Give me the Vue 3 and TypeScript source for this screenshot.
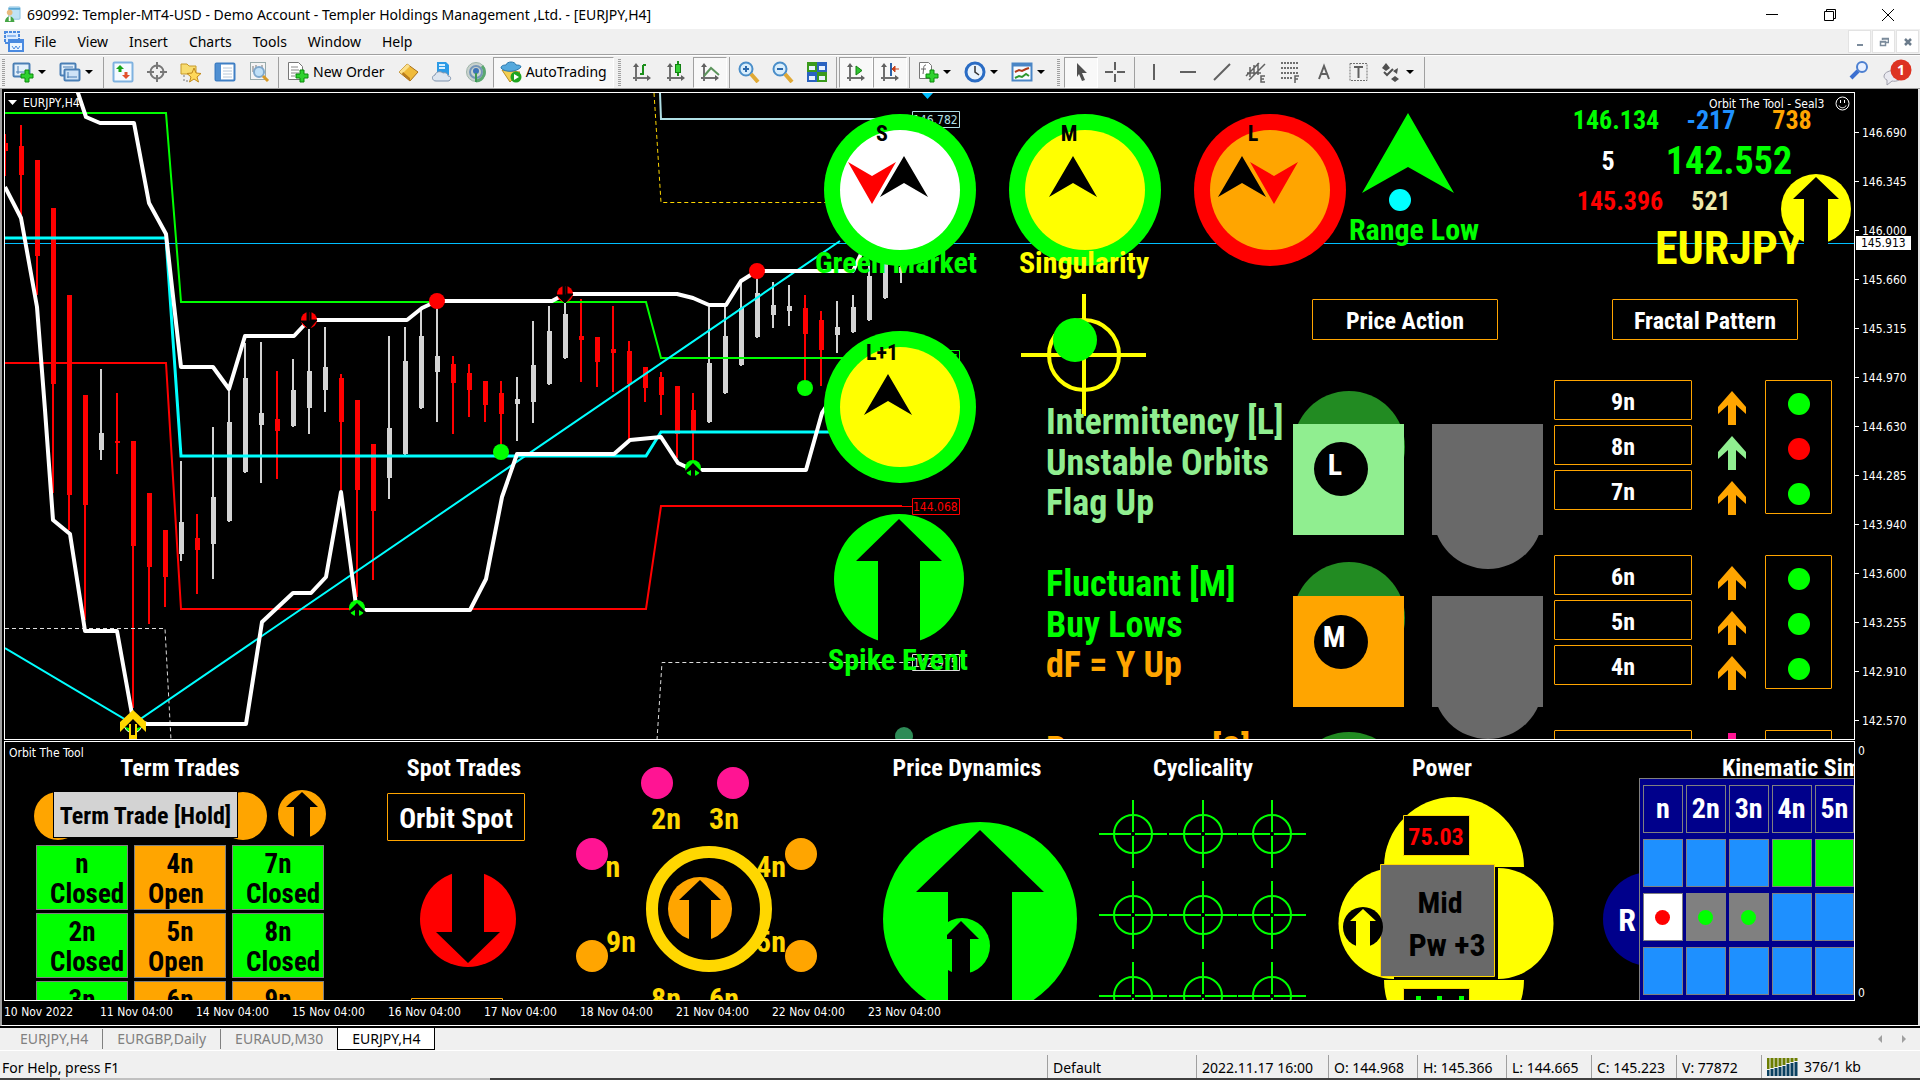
<script setup lang="ts">
interface Label { x: number; y: number; t: string; c: string; s: number; a?: 'middle' }
type Candle = [number, number, number, number, number]

const menus = ['File', 'View', 'Insert', 'Charts', 'Tools', 'Window', 'Help']

const chartAxes = '<path d="M5 5v15M2 17h15" stroke="#707070" stroke-width="2" fill="none"/><path d="M2 6l3-4 3 4zM16 14l4 3-4 3z" fill="#606060"/>'
const plus = '<path d="M13 9h4v4h4v4h-4v4h-4v-4H9v-4h4z" fill="#2fd22f" stroke="#0c8a0c"/>'
const icons: Record<string, string> = {
  newChart: '<rect x="1.500" y="2.500" width="16" height="13" rx="1" fill="#e3f0fb" stroke="#4a7fb5" stroke-width="2"/><path d="M6 5v8M4 11h9" stroke="#4a7fb5" fill="none"/>' + plus,
  profiles: '<rect x="1.500" y="2.500" width="15" height="12" rx="1" fill="#e3f0fb" stroke="#4a7fb5" stroke-width="2"/><path d="M4 6h10" stroke="#4a7fb5"/><rect x="5.500" y="8.500" width="15" height="11" rx="1" fill="#cfe4f7" stroke="#4a7fb5" stroke-width="2"/><path d="M8 16h10M9 11v6" stroke="#4a7fb5"/>',
  market: '<rect x="1.500" y="1.500" width="19" height="19" rx="1" fill="#f5faff" stroke="#7fb2e0" stroke-width="2"/><path d="M8 4l4 4h-2.500v3h-3V8H4z" fill="#16a516"/><path d="M14 18l4-4h-2.500v-3h-3v3H10z" fill="#e2502a"/>',
  target: '<circle cx="11" cy="11" r="6.500" fill="none" stroke="#777" stroke-width="2"/><path d="M11 1v7M11 14v7M1 11h7M14 11h7" stroke="#777" stroke-width="2"/>',
  star: '<path d="M1 3h6l2 2h7v8H1z" fill="#f8dc70" stroke="#c79a2a"/><path d="M4 14v6h5" stroke="#777" stroke-dasharray="2 2" fill="none"/><path d="M14 7l2 5 5 .5-4 3.500 1.500 5-4.500-3-4.500 3L11 16l-4-3.500 5-.5z" fill="#ffd85a" stroke="#c28a1c"/>',
  dataWin: '<rect x="1.500" y="2.500" width="19" height="17" rx="1" fill="#fff" stroke="#3f7fc4" stroke-width="2"/><rect x="2" y="3" width="5" height="16" fill="#4f8fd2"/><path d="M9 7h9M9 10h9M9 13h9M9 16h9" stroke="#b8c8d8"/>',
  tester: '<rect x="2.500" y="1.500" width="15" height="17" fill="#f4f4f4" stroke="#9aa"/><path d="M5 5v6M8 4v5M14 4v5" stroke="#777"/><circle cx="11" cy="11" r="5" fill="#bfe0f7" stroke="#7fa8cc" stroke-width="2"/><path d="M15 15l5 5" stroke="#d79a28" stroke-width="3"/>',
  order: '<path d="M1.500 1.500h10l4 4v13h-14z" fill="#fff" stroke="#777"/><path d="M4 6h7M4 9h8M4 12h8M4 15h4" stroke="#888"/>' + plus,
  gold: '<path d="M2 11l8-8 11 8-8 9z" fill="#f0bb3a" stroke="#a8701a"/><path d="M2 11l8-8 3 2-8 8z" fill="#fbe08a"/><path d="M5 13l8 7v-3l-7-6z" fill="#b97c1d"/>',
  cloud: '<path d="M6 1h9l3 3v10H6z" fill="#2c9be6"/><path d="M8 4h6M8 7h6" stroke="#d6efff" stroke-width="2"/><path d="M5 20c-4 0-5-5-1-6 1-4 6-4 8-2 3-1 5 1 5 3 4 0 3 5 0 5z" fill="#dde5ef" stroke="#7f93ad"/>',
  signal: '<circle cx="11" cy="11" r="9.500" fill="#c9d2ce" stroke="#9fb5aa"/><path d="M11 20a9 9 0 0 0 6-15" fill="none" stroke="#5aa870" stroke-width="3"/><circle cx="11" cy="11" r="6" fill="none" stroke="#7596b8" stroke-width="2"/><circle cx="11" cy="10" r="3" fill="#3c74b8"/><path d="M11 12v9" stroke="#3b9a55" stroke-width="2"/>',
  auto: '<path d="M2 9l8 12 10-10z" fill="#f3cf52" stroke="#b98c22"/><path d="M1 7c0-3 4-3 5-3 1-4 9-4 10 0 2 0 5 0 5 2-4 5-16 6-20 1z" fill="#55a9dd" stroke="#2c79ad"/><circle cx="16" cy="16" r="5.500" fill="#1ea51e"/><path d="M14 13l5 3-5 3z" fill="#fff"/>',
  bars: chartAxes + '<path d="M12 4v10M12 4h3M9 13h3" stroke="#1b8f1b" stroke-width="2"/>',
  candles: chartAxes + '<path d="M13 0v15" stroke="#1b8f1b" stroke-width="2"/><rect x="10.500" y="3.500" width="5" height="8" fill="#35cf35" stroke="#128012"/>',
  line: chartAxes + '<path d="M5 15l7-8 8 7" stroke="#5c945c" stroke-width="2" fill="none"/>',
  zoomIn: '<circle cx="8" cy="8" r="6.500" fill="#d9eefc" stroke="#4a8ec9" stroke-width="2"/><path d="M5 8h6M8 5v6" stroke="#2b69ac" stroke-width="2"/><path d="M13 13l7 8" stroke="#e0a935" stroke-width="4"/>',
  zoomOut: '<circle cx="8" cy="8" r="6.500" fill="#d9eefc" stroke="#4a8ec9" stroke-width="2"/><path d="M5 8h6" stroke="#2b69ac" stroke-width="2"/><path d="M13 13l7 8" stroke="#e0a935" stroke-width="4"/>',
  tile: '<path d="M1 1h10v10H1zM11 11h10v10H11z" fill="#3a9a1c"/><path d="M11 1h10v10H11zM1 11h10v10H1z" fill="#2a62c0"/><path d="M3 5h6v4H3zM13 5h6v4h-6zM3 15h6v4H3zM13 15h6v4h-6z" fill="#e8f2ff"/>',
  scroll: chartAxes + '<path d="M11 5v9l6-4.500z" fill="#2fc52f" stroke="#158015"/>',
  shift: chartAxes + '<path d="M12 2v13" stroke="#2b62a8" stroke-width="2"/><path d="M20 8h-6M16 5l-3 3 3 3z" stroke="#c8431c" fill="#c8431c"/>',
  indicator: '<path d="M2.500 1.500h9l3 3v13h-12z" fill="#fff" stroke="#777"/><path d="M9 4c-3 0-2 3-3 9M4 8h5" stroke="#666" fill="none"/>' + plus,
  clock: '<circle cx="11" cy="11" r="9" fill="#e9f3fc" stroke="#2a6cc4" stroke-width="3"/><path d="M11 5v6l4 3" stroke="#333" fill="none" stroke-width="1.500"/>',
  template: '<rect x="1.500" y="2.500" width="19" height="17" fill="#f8fbff" stroke="#4a86c6" stroke-width="2"/><path d="M2 4h18" stroke="#4a86c6" stroke-width="3"/><path d="M4 11l4-2 3 1 4-2 3-1" stroke="#b03818" stroke-width="2" fill="none"/><path d="M4 17l4-2 3 1 4-3 3 2" stroke="#2c962c" stroke-width="2" fill="none"/>',
  cursor: '<path d="M7 2l10 10h-5l3 7-3 1-3-7-2 3z" fill="#505050"/>',
  cross: '<path d="M11 1v8M11 13v8M1 11h8M13 11h8" stroke="#606060" stroke-width="2"/>',
  vline: '<path d="M11 3v16" stroke="#606060" stroke-width="2"/>',
  hline: '<path d="M3 11h16" stroke="#606060" stroke-width="2"/>',
  trend: '<path d="M3 19L19 3" stroke="#606060" stroke-width="2"/>',
  channel: '<path d="M1 15L14 2M4 19L20 3M5 6v10M9 4v10M13 2v12M2 12h14" stroke="#606060" stroke-width="1.500"/><path d="M20 15h-4v6h4M16 18h3" fill="none" stroke="#606060" stroke-width="1.500"/>',
  fibo: '<path d="M2 2h18M2 7h18M2 12h18M2 17h11" stroke="#707070" stroke-width="2" stroke-dasharray="2 1"/><path d="M20 15h-4v7M16 18h3" fill="none" stroke="#606060" stroke-width="1.500"/>',
  text: '<path d="M6 18l5-13 5 13M8 13h6" fill="none" stroke="#606060" stroke-width="2"/>',
  label: '<rect x="3" y="2.500" width="17" height="17" fill="none" stroke="#707070" stroke-dasharray="2 1"/><path d="M7 6h9M11.500 6v11" fill="none" stroke="#606060" stroke-width="2"/>',
  shapes: '<path d="M2 7l4-5 4 5-4 3zM11 18l4-3 4 3-4 3z" fill="#505050"/><path d="M4 11l3 3 6-6" stroke="#505050" stroke-width="2" fill="none"/><path d="M13 10l5-3-1 6z" fill="#505050"/>',
}
type Tool = { k: string; i?: string; n?: string; on?: boolean; drop?: boolean; t?: string }
const tools: Tool[] = [
  { k: 'grip' },
  { k: 'btn', i: 'newChart', n: 'New chart', drop: true }, { k: 'btn', i: 'profiles', n: 'Profiles', drop: true }, { k: 'sep' },
  { k: 'btn', i: 'market', n: 'Market Watch' }, { k: 'btn', i: 'target', n: 'Navigator' }, { k: 'btn', i: 'star', n: 'Favorites' },
  { k: 'btn', i: 'dataWin', n: 'Terminal' }, { k: 'btn', i: 'tester', n: 'Strategy Tester' }, { k: 'sep' },
  { k: 'btn', i: 'order', n: 'New Order', t: 'New Order' },
  { k: 'btn', i: 'gold', n: 'MetaEditor' }, { k: 'btn', i: 'cloud', n: 'Virtual hosting' }, { k: 'btn', i: 'signal', n: 'Signals' },
  { k: 'btn', i: 'auto', n: 'AutoTrading', t: 'AutoTrading', on: true },
  { k: 'grip' },
  { k: 'btn', i: 'bars', n: 'Bar chart' }, { k: 'btn', i: 'candles', n: 'Candlesticks' }, { k: 'btn', i: 'line', n: 'Line chart', on: true }, { k: 'sep' },
  { k: 'btn', i: 'zoomIn', n: 'Zoom in' }, { k: 'btn', i: 'zoomOut', n: 'Zoom out' }, { k: 'btn', i: 'tile', n: 'Tile windows' }, { k: 'sep' },
  { k: 'btn', i: 'scroll', n: 'Auto scroll', on: true }, { k: 'btn', i: 'shift', n: 'Chart shift', on: true }, { k: 'sep' },
  { k: 'btn', i: 'indicator', n: 'Indicators', drop: true }, { k: 'btn', i: 'clock', n: 'Periods', drop: true }, { k: 'btn', i: 'template', n: 'Templates', drop: true },
  { k: 'grip' },
  { k: 'btn', i: 'cursor', n: 'Cursor', on: true }, { k: 'btn', i: 'cross', n: 'Crosshair' }, { k: 'sep' },
  { k: 'btn', i: 'vline', n: 'Vertical line' }, { k: 'btn', i: 'hline', n: 'Horizontal line' }, { k: 'btn', i: 'trend', n: 'Trendline' },
  { k: 'btn', i: 'channel', n: 'Channel' }, { k: 'btn', i: 'fibo', n: 'Fibonacci' }, { k: 'btn', i: 'text', n: 'Text' }, { k: 'btn', i: 'label', n: 'Text label' },
  { k: 'btn', i: 'shapes', n: 'Arrows', drop: true }, { k: 'sep' },
]

// One row per H4 bar: bullish flag, high, low, body top, body bottom
const candles: Candle[] = [
  [0, 134, 176, 143, 151], [0, 125, 215, 146, 175], [0, 160, 295, 160, 256], [0, 208, 493, 208, 384], [0, 295, 530, 295, 495],
  [0, 395, 620, 395, 505], [1, 369, 460, 433, 450], [0, 393, 474, 441, 443], [0, 441, 708, 441, 546], [0, 493, 624, 493, 567],
  [0, 530, 607, 530, 577], [1, 461, 561, 522, 554], [0, 514, 594, 538, 550], [1, 427, 579, 497, 544], [1, 390, 522, 422, 521],
  [1, 343, 473, 378, 472], [1, 342, 483, 413, 425], [0, 371, 479, 419, 431], [1, 359, 427, 390, 426], [1, 325, 434, 371, 408],
  [1, 327, 412, 367, 390], [0, 374, 490, 378, 422], [0, 400, 597, 400, 490], [0, 444, 580, 444, 511], [1, 336, 499, 428, 478],
  [1, 327, 455, 361, 454], [1, 308, 409, 336, 408], [1, 303, 422, 356, 372], [0, 356, 434, 364, 383], [0, 364, 417, 373, 390],
  [0, 381, 422, 381, 405], [0, 381, 445, 393, 414], [1, 377, 441, 399, 404], [1, 321, 423, 365, 402], [1, 306, 385, 331, 384],
  [1, 302, 359, 314, 358], [0, 299, 382, 336, 340], [0, 337, 387, 337, 362], [0, 306, 392, 349, 353], [0, 341, 439, 351, 384],
  [0, 367, 402, 367, 388], [0, 372, 415, 377, 395], [0, 386, 458, 386, 434], [0, 393, 460, 410, 433], [1, 307, 423, 363, 422],
  [1, 307, 394, 336, 393], [1, 282, 366, 308, 365], [1, 277, 338, 293, 337], [1, 282, 328, 305, 315], [1, 285, 326, 306, 311],
  [0, 295, 380, 308, 334], [0, 311, 386, 320, 350], [1, 301, 353, 327, 335], [1, 295, 333, 307, 332], [1, 263, 321, 276, 320],
  [1, 257, 299, 257, 298], [1, 257, 283, 267, 273],
]

const lime = '#00ff00', yellow = '#ffff00', orange = '#ffa500', gold = '#ffd700', pink = '#ff1493'

// Arrow that fills a disc of radius r, its shaft open at the disc's edge
function cut(cx: number, cy: number, r: number, down = false): string {
  const k = down ? -1 : 1
  const p = (x: number, y: number) => `${Math.round(cx + x * r)} ${Math.round(cy + k * y * r)}`
  return `M${p(0, -0.92)}L${p(0.66, -0.28)}L${p(0.33, -0.28)}L${p(0.33, 1.02)}L${p(-0.33, 1.02)}L${p(-0.33, -0.28)}L${p(-0.66, -0.28)}Z`
}
const wedge = (x: number, y: number) => `M${x} ${y}l24 41-24-14-24 14z`
const wedgeDown = (x: number, y: number) => `M${x} ${y}l24-42-24 14-24-14z`

const dials = [
  { x: 900, y: 190, ring: lime, face: '#ffffff' },
  { x: 1085, y: 190, ring: lime, face: yellow },
  { x: 1270, y: 190, ring: '#ff0000', face: orange },
  { x: 900, y: 407, ring: lime, face: yellow },
]

const mainLabels: Label[] = [
  { x: 882, y: 141, t: 'S', c: '#000', s: 1, a: 'middle' }, { x: 1069, y: 141, t: 'M', c: '#000', s: 1, a: 'middle' },
  { x: 1253, y: 141, t: 'L', c: '#000', s: 1, a: 'middle' }, { x: 882, y: 360, t: 'L+1', c: '#000', s: 1, a: 'middle' },
  { x: 896, y: 273, t: 'Green Market', c: lime, s: 3, a: 'middle' }, { x: 1084, y: 273, t: 'Singularity', c: yellow, s: 3, a: 'middle' },
  { x: 1414, y: 240, t: 'Range Low', c: lime, s: 3, a: 'middle' }, { x: 898, y: 670, t: 'Spike Event', c: lime, s: 3, a: 'middle' },
  { x: 1046, y: 434, t: 'Intermittency [L]', c: '#90ee90', s: 5 }, { x: 1046, y: 475, t: 'Unstable Orbits', c: '#90ee90', s: 5 },
  { x: 1046, y: 515, t: 'Flag Up', c: '#90ee90', s: 5 }, { x: 1046, y: 596, t: 'Fluctuant [M]', c: lime, s: 5 },
  { x: 1046, y: 637, t: 'Buy Lows', c: lime, s: 5 }, { x: 1046, y: 677, t: 'dF = Y Up', c: orange, s: 5 },
  { x: 1046, y: 762, t: 'Resonance [S]', c: orange, s: 5 },
  { x: 1335, y: 475, t: 'L', c: '#fff', s: 3, a: 'middle' }, { x: 1334, y: 647, t: 'M', c: '#fff', s: 3, a: 'middle' },
  { x: 1616, y: 129, t: '146.134', c: lime, s: 8, a: 'middle' }, { x: 1711, y: 129, t: '-217', c: '#1e90ff', s: 8, a: 'middle' },
  { x: 1792, y: 129, t: '738', c: orange, s: 8, a: 'middle' }, { x: 1608, y: 170, t: '5', c: '#fff', s: 8, a: 'middle' },
  { x: 1729, y: 174, t: '142.552', c: lime, s: 6, a: 'middle' }, { x: 1620, y: 210, t: '145.396', c: '#ff0000', s: 8, a: 'middle' },
  { x: 1711, y: 210, t: '521', c: '#eee8aa', s: 8, a: 'middle' }, { x: 1729, y: 264, t: 'EURJPY', c: yellow, s: 7, a: 'middle' },
]

const orbit = [
  { x: 657, y: 783, c: pink }, { x: 733, y: 783, c: pink }, { x: 592, y: 854, c: pink },
  { x: 801, y: 854, c: orange }, { x: 592, y: 956, c: orange }, { x: 801, y: 956, c: orange },
]
const orbitLabels: Label[] = [
  { x: 666, y: 829, t: '2n', c: gold, s: 3, a: 'middle' }, { x: 724, y: 829, t: '3n', c: gold, s: 3, a: 'middle' },
  { x: 613, y: 877, t: 'n', c: gold, s: 3, a: 'middle' }, { x: 771, y: 877, t: '4n', c: gold, s: 3, a: 'middle' },
  { x: 621, y: 952, t: '9n', c: gold, s: 3, a: 'middle' }, { x: 771, y: 952, t: '5n', c: gold, s: 3, a: 'middle' },
  { x: 666, y: 1009, t: '8n', c: gold, s: 3, a: 'middle' }, { x: 724, y: 1009, t: '6n', c: gold, s: 3, a: 'middle' },
]
const subLabels: Label[] = [
  { x: 180, y: 776, t: 'Term Trades', c: '#fff', s: 2, a: 'middle' }, { x: 464, y: 776, t: 'Spot Trades', c: '#fff', s: 2, a: 'middle' },
  { x: 967, y: 776, t: 'Price Dynamics', c: '#fff', s: 2, a: 'middle' }, { x: 1203, y: 776, t: 'Cyclicality', c: '#fff', s: 2, a: 'middle' },
  { x: 1442, y: 776, t: 'Power', c: '#fff', s: 2, a: 'middle' }, { x: 1722, y: 776, t: 'Kinematic Similarity', c: '#fff', s: 2 },
  { x: 1436, y: 845, t: '75.03', c: '#ff0000', s: 2, a: 'middle' }, { x: 1440, y: 913, t: 'Mid', c: '#000', s: 3, a: 'middle' },
  { x: 1447, y: 956, t: 'Pw +3', c: '#000', s: 4, a: 'middle' }, { x: 1627, y: 931, t: 'R', c: '#fff', s: 4, a: 'middle' },
]

const ladder = [
  { rows: ['9n', '8n', '7n'], arrows: [orange, '#90ee90', orange], lamps: [lime, '#ff0000', lime], down: false },
  { rows: ['6n', '5n', '4n'], arrows: [orange, orange, orange], lamps: [lime, lime, lime], down: false },
  { rows: ['3n', '2n', 'n'], arrows: [pink, pink, pink], lamps: [lime, lime, lime], down: true },
]
const terms = [
  ['n', 0], ['4n', 1], ['7n', 0], ['2n', 0], ['5n', 1], ['8n', 0], ['3n', 0], ['6n', 1], ['9n', 1],
] as [string, number][]
const kinHead = ['n', '2n', '3n', '4n', '5n', '6n', '7n', '8n', '9n']
const kinRows = [
  ['b', 'b', 'b', 'g', 'g', 'g', 'b', 'b', 'b'],
  ['wr', 'kg', 'kg', 'b', 'b', 'b', 'b', 'b', 'b'],
  ['b', 'b', 'b', 'b', 'b', 'b', 'b', 'b', 'b'],
]
const cycles = [834, 915, 996].flatMap(y => [1133, 1203, 1272].map(x => ({ x, y })))
const prices = ['146.690', '146.345', '146.000', '145.660', '145.315', '144.970', '144.630', '144.285', '143.940', '143.600', '143.255', '142.910', '142.570']
const times = ['10 Nov 2022', '11 Nov 04:00', '14 Nov 04:00', '15 Nov 04:00', '16 Nov 04:00', '17 Nov 04:00', '18 Nov 04:00', '21 Nov 04:00', '22 Nov 04:00', '23 Nov 04:00']
const tabs = ['EURJPY,H4', 'EURGBP,Daily', 'EURAUD,M30', 'EURJPY,H4']
</script>

<template>
  <div class="app">
    <header class="titlebar">
      <svg class="logo" viewBox="0 0 18 18"><rect x="5" y="1" width="12" height="13" rx="1" fill="#bfe2f5" stroke="#8cc3e2" /><path d="M5 3h12" stroke="#5aa7d4" stroke-width="2" /><circle cx="6" cy="7" r="3" fill="#e8b97c" /><path d="M1 17c0-8 10-8 10 0z" fill="#45a545" /><path d="M6 11v5" stroke="#fff" stroke-width="2" /></svg>
      <h1>690992: Templer-MT4-USD - Demo Account - Templer Holdings Management ,Ltd. - [EURJPY,H4]</h1>
      <div class="winbtns">
        <button aria-label="Minimize"><svg viewBox="0 0 12 12"><path d="M0 5.500h12" /></svg></button>
        <button aria-label="Restore"><svg viewBox="0 0 12 12"><path d="M.5 2.500h9v9h-9zM2.500 2.500v-2h9v9h-2" /></svg></button>
        <button aria-label="Close"><svg viewBox="0 0 12 12"><path d="M0 0l12 12M12 0L0 12" /></svg></button>
      </div>
    </header>

    <nav class="menubar">
      <svg class="mlogo" viewBox="0 0 20 22"><path d="M1 1h14v11H1z" fill="#dcecff" stroke="#4a8ae0" stroke-width="2" stroke-dasharray="3 1" /><path d="M3 5h9" stroke="#4a8ae0" /><path d="M5 9h14v11H5z" fill="#eef6ff" stroke="#4a8ae0" stroke-width="2" /><path d="M6 11h12" stroke="#4a8ae0" stroke-width="2" /><path d="M8 15l2 3 2-3 2 3 2-3" stroke="#4a8ae0" fill="none" /></svg>
      <button v-for="m in menus" :key="m">{{ m }}</button>
      <div class="mdi">
        <button aria-label="Minimize chart"><svg viewBox="0 0 10 10"><path d="M2 7h6v2H2z" fill="#7b8b9b" /></svg></button>
        <button aria-label="Restore chart"><svg viewBox="0 0 10 10"><path d="M3.500 3V1.500h6v4H7M1.500 4.500h5v4h-5zM3 2h6M1 5h5" fill="none" stroke="#7b8b9b" stroke-width="1.500" /></svg></button>
        <button aria-label="Close chart"><svg viewBox="0 0 10 10"><path d="M2 2l6 6M8 2L2 8" stroke="#6b7b8b" stroke-width="2.500" /></svg></button>
      </div>
    </nav>

    <div class="toolbar">
      <template v-for="(b, n) in tools" :key="n">
        <i v-if="b.k === 'grip'" class="grip"></i>
        <i v-else-if="b.k === 'sep'" class="sep"></i>
        <button v-else :class="{ on: b.on, drop: b.drop, wide: b.t }" :aria-label="b.n">
          <svg viewBox="0 0 22 22" v-html="icons[b.i!]"></svg>
          <span v-if="b.t">{{ b.t }}</span>
          <b v-if="b.drop" class="caret"></b>
        </button>
      </template>
      <div class="right">
        <button aria-label="Search"><svg viewBox="0 0 22 22"><circle cx="14" cy="8" r="5" fill="#e8f0ff" stroke="#4c7fd0" stroke-width="2" /><path d="M10 12l-7 7" stroke="#3c6fd0" stroke-width="4" /></svg></button>
        <button class="chat" aria-label="1 message"><svg viewBox="0 0 32 28"><path d="M2 18c0-6 16-8 18-2 1 6-6 8-10 7l-5 4v-5c-2-1-3-2-3-4z" fill="#e9e9f0" stroke="#a0a0ac" /><circle cx="19" cy="12" r="10.500" fill="#dd3322" /></svg><em>1</em></button>
      </div>
    </div>

    <main class="workspace">
      <div class="plots">
        <section class="panel price" aria-label="EURJPY,H4 chart">
          <svg class="layer">
            <g transform="translate(-5 -93)">
              <path d="M5 243.500H1855" stroke="#00bfff" />
              <g shape-rendering="crispEdges">
                <g v-for="(c, i) in candles" :key="i" :fill="c[0] ? '#d3d3d3' : '#ff0000'">
                  <rect :x="4 + 16 * i" :y="c[1]" width="2" :height="c[2] - c[1]" />
                  <rect :x="3 + 16 * i" :y="c[3]" width="5" :height="c[4] - c[3]" />
                </g>
              </g>
              <g fill="none">
                <path d="M5 628.500H165L171 740M657 740L662 662.500H912" stroke="#ddd" stroke-dasharray="4 3" />
                <path d="M654 93L661 202.500H830" stroke="#ffd700" stroke-dasharray="4 3" />
                <path d="M660 93L661 119H880" stroke="#b0e0e6" stroke-width="2" />
                <path d="M5 113H166L181 302H646L661 358H843" stroke="#00ff00" stroke-width="2" />
                <path d="M5 363H166L181 609H646L661 506H902" stroke="#ff0000" stroke-width="2" />
                <path d="M902 506.500H912" stroke="#ff0000" />
                <path d="M5 238H166L181 456H646L661 432H840" stroke="#00ffff" stroke-width="3" />
                <path d="M5 648L133 724L840 241" stroke="#00ffff" stroke-width="2" />
                <g stroke="#fff" stroke-width="4" stroke-linejoin="round">
                  <path d="M77 90L86 117L100 123H134L149 203L166 234L181 367H213L229 389L245 336H294L309 320H407L422 308L437 301H552L565 294H677L693 298L709 305H726L741 281L757 271H853L861 254" />
                  <path d="M5 187L21 218L37 307L45 410L53 520L70 534L85 631H117L133 720L147 724H246L262 622L293 593H311L326 577L341 492L356 605L365 610H470L486 579L502 497L517 454H614L630 440L661 437L678 463L693 470H806L822 413L834 394" />
                </g>
                <g stroke-width="1">
                  <path d="M912.500 111.500h47v16h-47z" stroke="#b0e0e6" /><path d="M912.500 350.500h47v16h-47z" stroke="#00ff00" />
                  <path d="M912.500 498.500h47v16h-47z" stroke="#ff0000" /><path d="M912.500 654.500h47v16h-47z" stroke="#ddd" />
                </g>
              </g>
              <g class="small">
                <text x="913" y="124" fill="#b0e0e6">146.782</text><text x="913" y="363" fill="#00ff00">145.097</text>
                <text x="913" y="511" fill="#ff0000">144.068</text><text x="913" y="667" fill="#ddd">142.975</text>
                <text x="23" y="107" fill="#fff">EURJPY,H4</text>
              </g>
              <path d="M8 100h9l-4.500 5z" fill="#fff" />
              <path d="M922 93h11l-5.500 6z" fill="#00bfff" />
              <g fill="#ff0000"><circle cx="437" cy="301" r="8" /><circle cx="757" cy="271" r="8" /><circle cx="309" cy="320" r="8" /><circle cx="565" cy="294" r="8" /></g>
              <path v-for="m in [[309, 320], [565, 294]]" :key="m[0]" :d="`M${m[0] - 2} ${m[1] - 8}v9h-6l8 8 8-9h-6v-8h-1v9h-1v-9z`" fill="#000" stroke="#000" />
              <g fill="#00ff00"><circle cx="501" cy="452" r="8" /><circle cx="805" cy="388" r="8" /><circle cx="357" cy="608" r="8" /><circle cx="693" cy="468" r="8" /></g>
              <path v-for="m in [[357, 608], [693, 468]]" :key="m[0]" :d="`M${m[0]} ${m[1] - 5}l9 9-2 1-5-3v7h-4v-7l-5 3-2-1z`" fill="#000" />
              <circle cx="133" cy="724" r="9" fill="#00ff00" stroke="#fff" /><path d="M133 714l12 12-8 2v11h-8v-11l-8-2z" fill="#000" />
              <path d="M133 710L146 722V732L133 719L120 732V722Z" fill="#ffd700" /><path d="M129 724h2v11h4v-11h2v15h-8z" fill="#ffd700" />

              <g v-for="(d, i) in dials" :key="i"><circle :cx="d.x" :cy="d.y" r="76" :fill="d.ring" /><circle :cx="d.x" :cy="d.y" r="60" :fill="d.face" /></g>
              <path :d="wedge(904, 156) + wedge(1073, 156) + wedge(1242, 156) + wedge(888, 374)" fill="#000" />
              <path :d="wedgeDown(872, 204) + wedgeDown(1274, 204)" fill="#ff0000" />
              <path d="M1408 113L1454 193L1408 167L1362 193Z" fill="#00ff00" /><circle cx="1400" cy="200" r="11" fill="#00ffff" />
              <circle cx="899" cy="579" r="65" fill="#00ff00" /><path :d="cut(899, 579, 65)" fill="#000" />
              <path d="M1021 355H1146M1084 294V416" stroke="#ffff00" stroke-width="4" /><circle cx="1084" cy="355" r="35" fill="none" stroke="#ffff00" stroke-width="4" />
              <circle cx="1075" cy="340" r="22" fill="#00ff00" />
              <circle cx="904" cy="736" r="9" fill="#2e8b57" />
              <g fill="#228b22"><circle cx="1349" cy="447" r="56" /><circle cx="1349" cy="788" r="56" /></g>
              <path d="M1293 480h111v82h-111z" fill="#000" /><path d="M1293 424h111v111h-111z" fill="#90ee90" />
              <circle cx="1349" cy="618" r="56" fill="#228b22" /><path d="M1293 596h111v111h-111z" fill="#ffa500" />
              <g fill="#696969"><circle cx="1488" cy="514" r="55" /><circle cx="1488" cy="684" r="55" /></g>
              <path d="M1430 569h115v27h-115z" fill="#000" /><path d="M1432 424h111v111h-111zM1432 596h111v111h-111z" fill="#696969" />
              <circle cx="1341" cy="469" r="27" fill="#000" /><circle cx="1341" cy="642" r="27" fill="#000" />
              <circle cx="1816" cy="209" r="35" fill="#ffff00" /><path :d="cut(1816, 209, 35)" fill="#000" />
              <text v-for="(l, i) in mainLabels" :key="i" :x="l.x" :y="l.y" :fill="l.c" :text-anchor="l.a" :class="'agency s' + l.s">{{ l.t }}</text>
              <text x="1709" y="108" fill="#fff" class="small">Orbit The Tool - Seal3</text>
              <g stroke="#fff" fill="none"><circle cx="1842.500" cy="103.500" r="6.500" /><path d="M1839 105.500c1 3 6 3 7 0M1840.500 100v3M1844.500 100v3" /></g>
            </g>
          </svg>
          <button class="box action">Price Action</button>
          <button class="box fractal">Fractal Pattern</button>
          <div class="ladder">
            <div v-for="g in ladder" :key="g.rows[0]" class="rung">
              <div class="steps"><button v-for="r in g.rows" :key="r" class="box">{{ r }}</button></div>
              <div class="arrows">
                <svg v-for="(a, i) in g.arrows" :key="i" viewBox="0 0 28 34"><path :d="g.down ? 'M10 -8h8v25l9-9v9L14 33 1 17V8l9 9z' : 'M14 0L28 16V23L18 14V34H10V14L0 23V16Z'" :fill="a" /></svg>
              </div>
              <div class="lamps"><i v-for="(l, i) in g.lamps" :key="i" :style="{ background: l }"></i></div>
            </div>
          </div>
        </section>

        <section class="panel sub" aria-label="Orbit The Tool">
          <svg class="layer">
            <g transform="translate(-5 -742)">
              <text x="9" y="757" fill="#fff" class="small">Orbit The Tool</text>
              <g fill="#ffa500"><circle cx="58" cy="816" r="24" /><circle cx="243" cy="816" r="24" /><circle cx="302" cy="814" r="24" /></g>
              <path :d="cut(302, 814, 24)" fill="#000" />
              <circle cx="468" cy="919" r="48" fill="#ff0000" /><path :d="cut(468, 919, 48, true)" fill="#000" />
              <path d="M411.500 1010V998.500h91V1010" fill="none" stroke="#ffa500" />
              <circle v-for="(o, i) in orbit" :key="i" :cx="o.x" :cy="o.y" r="16" :fill="o.c" />
              <text v-for="(l, i) in orbitLabels" :key="'o' + i" :x="l.x" :y="l.y" :fill="l.c" :text-anchor="l.a" :class="'agency s' + l.s">{{ l.t }}</text>
              <circle cx="709" cy="909" r="57" fill="#000" stroke="#ffd700" stroke-width="12" />
              <circle cx="700" cy="909" r="32" fill="#ffa500" /><path :d="cut(700, 909, 32)" fill="#000" />
              <circle cx="980" cy="919" r="97" fill="#00ff00" /><path :d="cut(980, 919, 97)" fill="#000" />
              <circle cx="962" cy="946" r="28" fill="#00ff00" /><path :d="cut(961, 947, 28)" fill="#000" /><path d="M920 935h27v50h-27z" fill="#00ff00" />
              <g v-for="(c, i) in cycles" :key="'c' + i" stroke="#00ff00" stroke-width="2" fill="none">
                <circle :cx="c.x" :cy="c.y" r="19" /><path :d="`M${c.x - 34} ${c.y}h32m4 0h32M${c.x} ${c.y - 34}v32m0 4v32`" />
              </g>
              <g fill="#ffff00">
                <path d="M1384 867a70 70 0 0 1 140 0z" /><path d="M1394 868a55 55 0 0 0 0 111z" /><path d="M1498 868a55 55 0 0 1 0 111z" /><path d="M1384 980h140a70 70 0 0 1-140 0z" />
              </g>
              <path d="M1403.500 815.500h66v40h-66zM1403.500 988.500h66v40h-66z" fill="#000" stroke="#ffd700" />
              <path d="M1380.500 864.500h114v112h-114z" fill="#696969" stroke="#ffd700" />
              <circle cx="1363" cy="927" r="20" fill="#000" /><path :d="cut(1363, 927, 20)" fill="#ffff00" />
              <path d="M1416 996h5v5h-5zM1437 996h5v5h-5zM1459 996h5v5h-5z" fill="#00ff00" />
              <circle cx="1650" cy="919" r="47" fill="#00008b" />
              <text v-for="(l, i) in subLabels" :key="'s' + i" :x="l.x" :y="l.y" :fill="l.c" :text-anchor="l.a" :class="'agency s' + l.s">{{ l.t }}</text>
            </g>
          </svg>
          <button class="hold">Term Trade [Hold]</button>
          <button class="box spot">Orbit Spot</button>
          <div class="terms">
            <button v-for="t in terms" :key="t[0]" :class="{ open: t[1] }"><span>{{ t[0] }}</span><span class="state">{{ t[1] ? 'Open' : 'Closed' }}</span></button>
          </div>
          <table class="kin">
            <thead><tr><th v-for="h in kinHead" :key="h">{{ h }}</th></tr></thead>
            <tbody><tr v-for="(r, i) in kinRows" :key="i"><td v-for="(c, j) in r" :key="j" :class="c"><i v-if="c.length > 1"></i></td></tr></tbody>
          </table>
        </section>

        <div class="times"><span v-for="t in times" :key="t">{{ t }}</span></div>
      </div>

      <aside class="scale">
        <div class="prices"><span v-for="p in prices" :key="p">{{ p }}</span><strong>145.913</strong></div>
        <div class="zeros"><span>0</span><span>0</span></div>
      </aside>
    </main>

    <nav class="tabs">
      <button v-for="(t, i) in tabs" :key="i" :class="{ active: i === 3 }">{{ t }}</button>
      <div class="pager"><i class="l"></i><i class="r"></i></div>
    </nav>

    <footer class="status">
      <span class="help">For Help, press F1</span>
      <span class="w1">Default</span><span class="w2">2022.11.17 16:00</span>
      <span class="w3">O: 144.968</span><span class="w3">H: 145.366</span><span class="w4">L: 144.665</span><span class="w4">C: 145.223</span><span class="w4">V: 77872</span>
      <span class="net"><svg viewBox="0 0 32 18"><path d="M1 0v11M5 0v10M9 0v9M13 0v8M17 0v7M21 0v5M25 0v4M29 0v3" stroke="#6b7d00" stroke-width="3" /><path d="M1 18v-6M5 18v-7M9 18v-8M13 18v-9M17 18v-10M21 18V6M25 18V5M29 18V4" stroke="#0a4060" stroke-width="3" /></svg>376/1 kb</span>
    </footer>
    <div class="edge"></div>
  </div>
</template>

<style>
html, body { margin: 0; background: #f0f0f0; }
</style>

<style scoped>
.app { display: flex; flex-direction: column; height: 100vh; min-height: 700px; overflow: hidden; background: #f0f0f0; color: #000; font: 14px/20px "Noto Sans", "Open Sans", sans-serif; }
button { font: inherit; color: inherit; background: none; border: 0; padding: 0; margin: 0; }
h1 { font: inherit; margin: 0; }
i, em { font-style: normal; }

.titlebar { display: flex; align-items: center; height: 29px; background: #fff; padding-left: 4px; gap: 6px; }
.logo { width: 17px; height: 17px; }
.winbtns { margin-left: auto; display: flex; padding-right: 3px; }
.winbtns button { width: 58px; height: 28px; display: grid; place-items: center; }
.winbtns svg { width: 12px; height: 12px; fill: none; stroke: #000; }

.menubar { display: flex; align-items: center; height: 25px; border-bottom: 1px solid #a0a0a0; padding-left: 4px; }
.mlogo { width: 20px; height: 22px; margin-right: 10px; }
.menubar > button { margin-right: 21px; }
.mdi { margin-left: auto; display: flex; gap: 1px; padding-right: 1px; }
.mdi button { width: 23px; height: 23px; background: #fff; border: 1px solid #e3e3e3; display: grid; place-items: center; }
.mdi svg { width: 10px; height: 10px; }

.toolbar { display: flex; align-items: center; height: 32px; border-top: 1px solid #fff; border-bottom: 1px solid #a0a0a0; }
.toolbar > button { width: 34px; height: 31px; flex: none; display: flex; align-items: center; justify-content: center; box-sizing: border-box; }
.toolbar svg { width: 22px; height: 22px; flex: none; }
.toolbar > .drop { width: 47px; justify-content: flex-start; padding-left: 5px; gap: 4px; }
.toolbar > .wide { width: auto; gap: 4px; padding: 0 6px; }
.toolbar > .on { background: #f8f8f8; border: 1px solid #a0a0a0; border-right-color: #fff; border-bottom-color: #fff; }
.caret { border: 4px solid transparent; border-top: 4px solid #000; border-bottom: 0; }
.sep { width: 1px; height: 31px; background: #a0a0a0; margin: 0 2px; flex: none; }
.grip { width: 3px; height: 27px; margin: 0 4px; flex: none; background: repeating-linear-gradient(#a0a0a0 0 1px, #f0f0f0 1px 2px); }
.grip:first-child { margin: 0 2px; }
.right { margin-left: auto; display: flex; gap: 12px; padding-right: 6px; align-items: center; }
.chat { position: relative; width: 32px; height: 28px; }
.toolbar .chat svg { width: 32px; height: 28px; }
.chat em { position: absolute; left: 15px; top: 2px; color: #fff; font-weight: bold; }

.workspace { flex: 1; display: flex; background: #000; min-height: 0; border-left: 2px solid #a0a0a0; border-right: 2px solid #e3e3e3; border-bottom: 1px solid #fff; padding: 3px 0 0 2px; }
.plots { flex: 1; min-width: 0; display: flex; flex-direction: column; }
.panel { position: relative; overflow: hidden; border: 1px solid #fff; }
.price { flex: 646 0 0; margin-bottom: 1px; }
.sub { flex: 258 0 0; }
.layer { position: absolute; left: 0; top: 0; width: 100%; height: 100%; }
.small, .scale, .times { font-family: "DejaVu Sans Condensed", "Noto Sans", sans-serif; font-size: 12px; }

.agency, .box, .hold, .terms, .kin { font-family: "Agency FB", "Roboto Condensed", "Liberation Sans Narrow", sans-serif; font-weight: bold; }
.s1 { font-size: 22px; }
.s2 { font-size: 24px; }
.s3 { font-size: 30px; }
.s4 { font-size: 32px; }
.s5 { font-size: 36px; }
.s6 { font-size: 38px; }
.s7 { font-size: 46px; }
.s8 { font-size: 26px; }

.box { border: 1px solid #ffa500; border-radius: 1px; background: #000; color: #fff; font-size: 24px; line-height: 38px; padding-top: 2px; box-sizing: border-box; white-space: nowrap; }
.action, .fractal { position: absolute; top: 206px; width: 186px; height: 41px; }
.action { left: 1307px; }
.fractal { left: 1607px; }
.ladder { position: absolute; left: 1549px; top: 287px; display: flex; flex-direction: column; gap: 41px; }
.rung { display: flex; height: 134px; }
.steps { display: flex; flex-direction: column; gap: 5px; width: 138px; }
.steps .box { height: 40px; flex: none; }
.arrows { width: 28px; margin: 0 19px 0 26px; padding-top: 11px; display: flex; flex-direction: column; gap: 11px; }
.arrows svg { width: 28px; height: 34px; flex: none; overflow: visible; }
.lamps { width: 67px; box-sizing: border-box; border: 1px solid #ffa500; border-radius: 1px; display: flex; flex-direction: column; align-items: center; gap: 23px; padding-top: 12px; }
.lamps i { width: 22px; height: 22px; border-radius: 50%; flex: none; }

.hold { position: absolute; left: 48px; top: 49px; width: 185px; height: 47px; padding-top: 2px; background: #d3d3d3; border: 1px solid #000; font-size: 24px; white-space: nowrap; }
.spot { position: absolute; left: 382px; top: 51px; width: 138px; height: 48px; font-size: 28px; line-height: 46px; }
.terms { position: absolute; left: 31px; top: 103px; display: grid; grid-template-columns: repeat(3, 92px); grid-auto-rows: 65px; gap: 3px 6px; font-size: 27px; line-height: 30px; }
.terms button { background: #00ff00; border: 1px solid #808080; padding-top: 3px; display: flex; flex-direction: column; justify-content: flex-start; overflow: hidden; }
.terms .open { background: #ffa500; }
.terms span { width: 100%; box-sizing: border-box; }
.terms .state { text-align: left; padding-left: 13px; }
.kin { position: absolute; left: 1634px; top: 36px; border-collapse: separate; border-spacing: 3px 6px; background: #00008b; border: 1px solid #808080; font-size: 28px; table-layout: fixed; width: 391px; }
.kin th, .kin td { box-sizing: border-box; height: 48px; padding: 0; border: 1px solid #808080; color: #fff; text-align: center; line-height: 44px; }
.kin .b { background: #1e90ff; }
.kin .g { background: #00ff00; }
.kin .wr { background: #fff; }
.kin .kg { background: #808080; }
.kin i { display: block; margin: 0 auto; width: 15px; height: 15px; border-radius: 50%; background: #00ff00; }
.kin .wr i { background: #ff0000; }

.times { display: flex; height: 24px; color: #fff; line-height: 22px; overflow: hidden; }
.times span { width: 96px; flex: none; white-space: nowrap; }

.scale { width: 63px; color: #fff; display: flex; flex-direction: column; }
.prices { position: relative; flex: 632 0 0; padding-top: 16px; overflow: hidden; }
.prices span { display: flex; align-items: center; height: 49px; }
.prices span::before { content: ""; width: 4px; height: 1px; background: #fff; margin-right: 3px; }
.prices strong { position: absolute; left: 1px; top: 144px; width: 50px; padding-left: 5px; line-height: 14px; background: #fff; color: #000; font-weight: normal; }
.zeros { flex: 262 0 0; display: flex; flex-direction: column; justify-content: space-between; padding: 0 0 22px 3px; }

.tabs { display: flex; height: 25px; border-top: 2px solid #000; border-bottom: 1px solid #fff; box-sizing: border-box; color: #808080; }
.tabs button { padding: 0 14px; border-right: 1px solid #808080; height: 20px; margin-top: 1px; }
.tabs button:first-child { padding-left: 20px; }
.tabs button:nth-child(3) { border-right: 0; }
.tabs .active { background: #fff; color: #000; border: 1px solid #000; border-top: 0; height: 22px; margin: 0; }
.pager { margin-left: auto; display: flex; gap: 20px; align-items: center; padding-right: 14px; }
.pager i { border: 4px solid transparent; }
.pager .l { border-left: 0; border-right-color: #a0a0a0; }
.pager .r { border-right: 0; border-left-color: #a0a0a0; }

.status { display: flex; height: 27px; align-items: flex-end; padding-left: 2px; }
.status span { border-left: 1px solid #a0a0a0; padding-left: 5px; height: 23px; line-height: 25px; box-sizing: border-box; white-space: nowrap; }
.status .help { flex: 1; border: 0; padding: 0; }
.w1 { width: 149px; }
.w2 { width: 132px; }
.w3 { width: 89px; }
.w4 { width: 85px; }
.status .net { width: 159px; display: flex; gap: 5px; align-items: center; }
.net svg { width: 32px; height: 18px; }
.edge { height: 2px; background: linear-gradient(90deg, #404040 0 60px, #c0c0c0 60px 490px, #404040 490px); }
</style>
